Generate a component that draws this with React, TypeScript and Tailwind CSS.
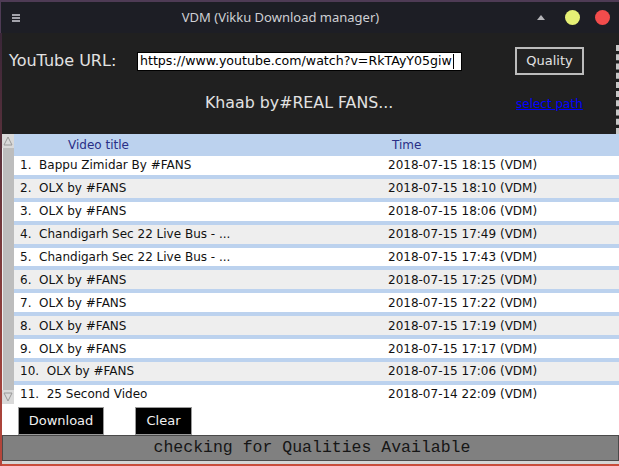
import React from 'react';

const rows = [
  { title: 'Bappu Zimidar By #FANS', time: '2018-07-15 18:15 (VDM)' },
  { title: 'OLX by #FANS', time: '2018-07-15 18:10 (VDM)' },
  { title: 'OLX by #FANS', time: '2018-07-15 18:06 (VDM)' },
  { title: 'Chandigarh Sec 22 Live Bus - ...', time: '2018-07-15 17:49 (VDM)' },
  { title: 'Chandigarh Sec 22 Live Bus - ...', time: '2018-07-15 17:43 (VDM)' },
  { title: 'OLX by #FANS', time: '2018-07-15 17:25 (VDM)' },
  { title: 'OLX by #FANS', time: '2018-07-15 17:22 (VDM)' },
  { title: 'OLX by #FANS', time: '2018-07-15 17:19 (VDM)' },
  { title: 'OLX by #FANS', time: '2018-07-15 17:17 (VDM)' },
  { title: 'OLX by #FANS', time: '2018-07-15 17:06 (VDM)' },
  { title: '25 Second Video', time: '2018-07-14 22:09 (VDM)' },
];

const tk = { fontFamily: '"DejaVu Sans", sans-serif' };

const App = () => {
  return (
    <div className="w-[619px] h-[466px] overflow-hidden flex flex-col bg-[#c84b3a]">
      {/* Title bar */}
      <div className="h-[2px] bg-[#4e3b55]" />
      <div
        className="h-[31px] flex items-center bg-[#1d1e25] border-l border-[#4e3b55] text-[#cfd0d4]"
        style={{ fontFamily: '"Noto Sans", sans-serif' }}
      >
        <div className="w-[8px] ml-[11px] flex flex-col gap-[1px]">
          <div className="h-[2px] bg-[#a3a3ab]" />
          <div className="h-[2px] bg-[#a3a3ab]" />
          <div className="h-[2px] bg-[#a3a3ab]" />
        </div>
        <div className="flex-1 text-center text-[13px] pl-[54px] pr-[50px]">VDM (Vikku Download manager)</div>
        <svg width="8" height="5" viewBox="0 0 8 5" className="mr-[20px]">
          <polygon points="4,0 8,5 0,5" fill="#b4b4b8" />
        </svg>
        <div className="w-[15px] h-[15px] rounded-full bg-[#e6f075] mr-[15px]" />
        <div className="w-[15px] h-[15px] rounded-full bg-[#f24c4c] mr-[9px]" />
      </div>

      {/* Body */}
      <div className="flex-1 flex">
        <div className="w-[2px] bg-gradient-to-b from-[#3a2638] via-[#7a3a3c] to-[#b8463a]" />
        <div className="flex-1 flex flex-col" style={tk}>
          {/* Top panel */}
          <div className="h-[101px] bg-[#202020] flex">
            <div className="flex-1 flex flex-col">
              <div className="flex items-center h-[28px] mt-[14px]">
                <span className="text-[16px] text-[#e2e2e2] ml-[7px] w-[128px]">YouTube URL:</span>
                <div className="w-[325px] h-[19px] bg-white border border-black flex items-center pl-[2px] text-[12.6px] text-black leading-none overflow-hidden">
                  <span className="whitespace-nowrap">https://www.youtube.com/watch?v=RkTAyY05giw</span>
                  <span className="w-[1px] h-[15px] bg-black ml-[1px] shrink-0" />
                </div>
                <button className="ml-[53px] w-[69px] h-[28px] border-2 border-[#bcbcbc] text-[#e2e2e2] text-[13px] bg-[#222222]">
                  Quality
                </button>
              </div>
              <div className="flex items-center h-[20px] mt-[18px]">
                <span className="ml-[203px] w-[311px] text-[15.8px] text-[#e2e2e2]">Khaab by#REAL FANS...</span>
                <span className="text-[12px] text-[#0000ff] underline mt-[2px]">select path</span>
              </div>
            </div>
            <div className="w-[3px] mt-[12px] border-r-[3px] border-dashed border-[#c8c8c8]" />
          </div>

          {/* Table */}
          <div className="h-[270px] flex bg-white">
            <div className="w-[12px] flex flex-col bg-[#d9d9d9]">
              <div className="h-[14px] flex items-center justify-center">
                <svg width="10" height="10" viewBox="0 0 10 10">
                  <polygon points="5,1 9,9 1,9" fill="#d9d9d9" stroke="#9a9a9a" strokeWidth="1" />
                </svg>
              </div>
              <div className="flex-1 bg-[#bdbdbd] border-l border-[#f0f0f0]" />
              <div className="h-[14px] flex items-center justify-center">
                <svg width="10" height="10" viewBox="0 0 10 10">
                  <polygon points="1,1 9,1 5,9" fill="#d9d9d9" stroke="#9a9a9a" strokeWidth="1" />
                </svg>
              </div>
            </div>
            <div className="flex-1 flex flex-col overflow-hidden text-[12px] text-[#111]">
              <div className="h-[22px] shrink-0 bg-[#bcd2ee] flex items-center text-[#2a2f86]">
                <span className="ml-[54px] w-[324px]">Video title</span>
                <span>Time</span>
              </div>
              {rows.map((r, i) => (
                <div
                  key={i}
                  className={`h-[22.9px] shrink-0 flex items-center border-b-4 border-[#bcd2ee] ${
                    i % 2 === 0 ? 'bg-white' : 'bg-[#eeeeee]'
                  }`}
                >
                  <span className="ml-[6px] w-[368px] whitespace-pre">{`${i + 1}.  ${r.title}`}</span>
                  <span>{r.time}</span>
                </div>
              ))}
            </div>
          </div>

          {/* Buttons */}
          <div className="h-[31px] bg-white flex items-center">
            <button className="ml-[16px] mt-[2px] w-[86px] h-[28px] bg-black border border-[#9a9a9a] text-[#f0f0f0] text-[13px]">
              Download
            </button>
            <button className="ml-[31px] mt-[2px] w-[57px] h-[28px] bg-black border border-[#9a9a9a] text-[#f0f0f0] text-[13px]">
              Clear
            </button>
          </div>

          {/* Status */}
          <div className="h-[26px] bg-[#808080] border border-[#4a4a4a] flex items-center justify-center">
            <span
              className="text-[16.5px] text-[#161616] ml-[3px]"
              style={{ fontFamily: '"Liberation Mono", monospace' }}
            >
              checking for Qualities Available
            </span>
          </div>
          <div className="h-[3px] bg-[#d4d4d4]" />
          <div className="h-[2px] bg-[#c84b3a]" />
        </div>
      </div>
    </div>
  );
};

export default App;
